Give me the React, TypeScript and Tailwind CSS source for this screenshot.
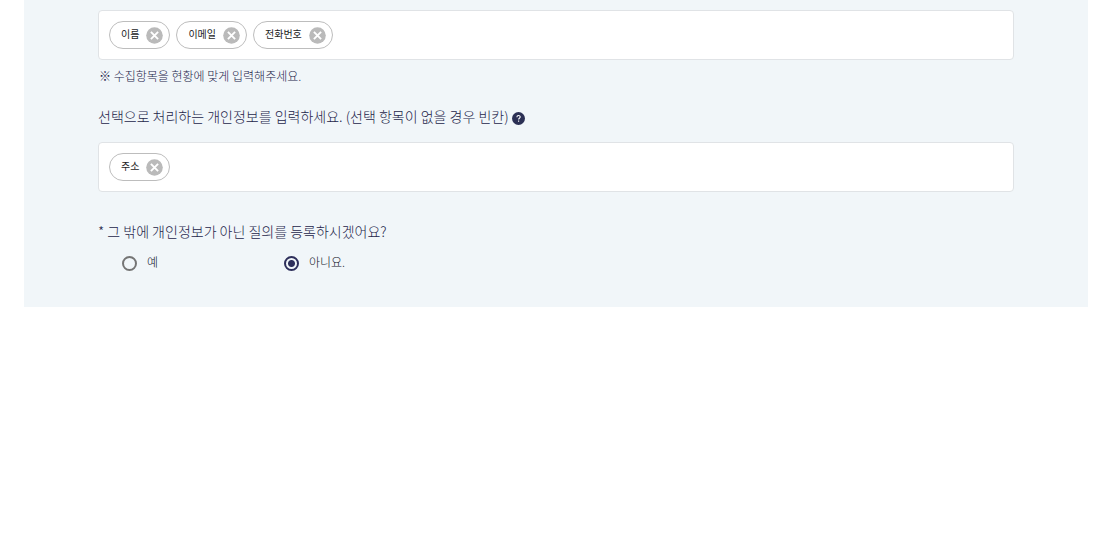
import { useState } from "react";

function RemoveIcon() {
  return (
    <svg viewBox="0 0 17 17" className="size-[17px]" aria-hidden="true">
      <circle cx="8.5" cy="8.5" r="8.3" fill="#bababa" />
      <path d="M4.9 4.9l7.2 7.2M12.1 4.9l-7.2 7.2" stroke="#fff" strokeWidth="1.9" />
    </svg>
  );
}

function TagField({ label, initial }: { label: string; initial: string[] }) {
  const [tags, setTags] = useState(initial);
  return (
    <div
      role="group"
      aria-label={label}
      className="flex min-h-[50px] flex-wrap items-center gap-[6px] rounded-[4px] border border-[#e0e3e6] bg-white px-[10px] py-[10px]"
    >
      {tags.map((tag) => (
        <span
          key={tag}
          className="flex h-7 items-center gap-[7px] rounded-full border border-[#bdbdbd] pr-[6px] pl-[11px] text-[10px] leading-4 font-normal text-[#1c1c1e]"
        >
          <span className="pb-[2px]">{tag}</span>
          <button
            type="button"
            aria-label={`${tag} 삭제`}
            onClick={() => setTags(tags.filter((t) => t !== tag))}
          >
            <RemoveIcon />
          </button>
        </span>
      ))}
    </div>
  );
}

function RadioOption({
  label,
  checked,
  onSelect,
}: {
  label: string;
  checked: boolean;
  onSelect: () => void;
}) {
  return (
    <label className="flex w-[162px] items-center gap-[10px] text-[12px] leading-4 text-[#10111f]">
      <input
        type="radio"
        name="extra-question"
        checked={checked}
        onChange={onSelect}
        className="mt-[3px] size-[15px] appearance-none rounded-full border-2 border-[#757575] checked:border-[#2e2f5b] checked:bg-[radial-gradient(circle,#2e2f5b_3px,transparent_4px)] checked:bg-origin-border"
      />
      <span>{label}</span>
    </label>
  );
}

export default function App() {
  const [answer, setAnswer] = useState("no");
  return (
    <main className="min-h-screen bg-white px-6 font-['Noto_Sans_CJK_KR',sans-serif] font-light text-[#24254a]">
      <section className="bg-[#f1f6f9] px-[74px] pt-[10px] pb-9">
        <TagField label="필수 개인정보" initial={["이름", "이메일", "전화번호"]} />
        <p className="mt-2 pl-px text-[12px] leading-4">※ 수집항목을 현황에 맞게 입력해주세요.</p>

        <div className="mt-[22px] mb-4 flex items-center gap-[3px] text-[14px] leading-5">
          <h2>선택으로 처리하는 개인정보를 입력하세요. (선택 항목이 없을 경우 빈칸)</h2>
          <button
            type="button"
            aria-label="도움말"
            className="mt-[5px] flex size-[13px] items-center justify-center rounded-full bg-[#2b3054]"
          >
            <svg viewBox="0 0 13 13" className="size-[13px]" aria-hidden="true">
              <path
                d="M4.9 5.2c0-2.2 3.3-2.2 3.3-.2 0 1.2-1.6 1.2-1.6 2.5M6.6 8.6v1.2"
                fill="none"
                stroke="#fff"
                strokeWidth="1.1"
              />
            </svg>
          </button>
        </div>
        <TagField label="선택 개인정보" initial={["주소"]} />

        <fieldset className="mt-[29px]">
          <legend className="text-[14px] leading-5">* 그 밖에 개인정보가 아닌 질의를 등록하시겠어요?</legend>
          <div className="mt-3 flex pl-6">
            <RadioOption label="예" checked={answer === "yes"} onSelect={() => setAnswer("yes")} />
            <RadioOption label="아니요." checked={answer === "no"} onSelect={() => setAnswer("no")} />
          </div>
        </fieldset>
      </section>
    </main>
  );
}
